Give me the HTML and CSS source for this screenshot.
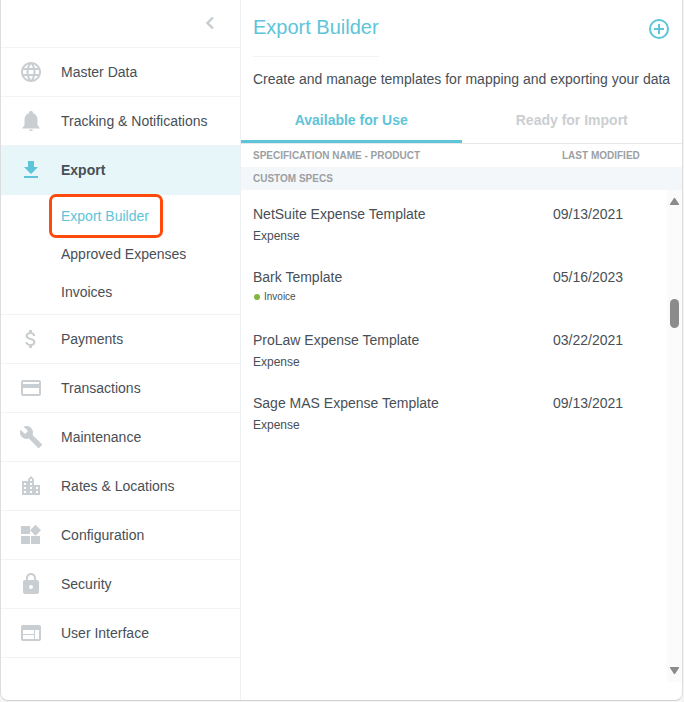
FILE: index.html
```html
<!DOCTYPE html>
<html lang="en">
<head>
  <meta charset="UTF-8" />
  <meta name="viewport" content="width=device-width, initial-scale=1.0"/>
  <title>Export Builder</title>
  <link rel="stylesheet" href="styles.css">
</head>
<body>
  <div class="panel">
    <nav class="sidebar">
      <div class="sidebar-top">
        <button class="collapse" aria-label="Collapse menu">
          <svg viewBox="0 0 24 24"><path d="M15.41 7.41 14 6l-6 6 6 6 1.41-1.41L10.83 12z"/></svg>
        </button>
      </div>
      <a class="nav-item" href="#">
        <svg viewBox="0 0 24 24"><path d="M11.99 2C6.47 2 2 6.48 2 12s4.47 10 9.99 10C17.52 22 22 17.52 22 12S17.52 2 11.99 2zm6.93 6h-2.95c-.32-1.25-.78-2.45-1.38-3.56 1.84.63 3.37 1.91 4.33 3.56zM12 4.04c.83 1.2 1.48 2.53 1.91 3.96h-3.82c.43-1.43 1.08-2.76 1.91-3.96zM4.26 14C4.1 13.36 4 12.69 4 12s.1-1.36.26-2h3.38c-.08.66-.14 1.32-.14 2s.06 1.34.14 2H4.26zm.82 2h2.95c.32 1.25.78 2.45 1.38 3.56-1.84-.63-3.37-1.9-4.33-3.56zm2.95-8H5.08c.96-1.66 2.49-2.93 4.33-3.56C8.81 5.55 8.35 6.75 8.03 8zM12 19.96c-.83-1.2-1.48-2.53-1.91-3.96h3.82c-.43 1.43-1.08 2.76-1.91 3.96zM14.34 14H9.66c-.09-.66-.16-1.32-.16-2s.07-1.35.16-2h4.68c.09.65.16 1.32.16 2s-.07 1.34-.16 2zm.25 5.56c.6-1.11 1.06-2.31 1.38-3.56h2.95c-.96 1.65-2.49 2.93-4.33 3.56zM16.36 14c.08-.66.14-1.32.14-2s-.06-1.34-.14-2h3.38c.16.64.26 1.31.26 2s-.1 1.36-.26 2h-3.38z"/></svg>
        Master Data
      </a>
      <a class="nav-item" href="#">
        <svg viewBox="0 0 24 24"><path d="M12 22c1.100 0 2-.6 2-1.500h-4c0 .9.9 1.500 2 1.500zm6.500-6v-5.500c0-3.070-1.640-5.640-4.500-6.320V3.500c0-.83-.9-1.500-2-1.500s-2 .67-2 1.500v.68C7.130 4.860 5.500 7.420 5.500 10.500V16L3 19.500h18z"/></svg>
        Tracking &amp; Notifications
      </a>
      <a class="nav-item active" href="#">
        <svg viewBox="0 0 24 24"><path d="M19 9h-4V3H9v6H5l7 7 7-7zM5 18v2h14v-2H5z"/></svg>
        Export
      </a>
      <ul class="submenu">
        <li><a class="current" href="#">Export Builder</a></li>
        <li><a href="#">Approved Expenses</a></li>
        <li><a href="#">Invoices</a></li>
      </ul>
      <a class="nav-item" href="#">
        <svg viewBox="0 0 24 24"><path d="M11.800 10.900c-2.270-.59-3-1.200-3-2.150 0-1.090 1.010-1.850 2.700-1.850 1.780 0 2.440.85 2.500 2.100h2.210c-.07-1.720-1.120-3.300-3.210-3.810V3h-3v2.160c-1.940.42-3.500 1.680-3.500 3.610 0 2.310 1.910 3.460 4.700 4.130 2.500.6 3 1.480 3 2.410 0 .69-.49 1.790-2.700 1.790-2.060 0-2.870-.92-2.980-2.100h-2.200c.12 2.190 1.760 3.420 3.680 3.830V21h3v-2.150c1.950-.37 3.500-1.500 3.500-3.550 0-2.840-2.430-3.810-4.700-4.400z"/></svg>
        Payments
      </a>
      <a class="nav-item" href="#">
        <svg viewBox="0 0 24 24"><path d="M20 4H4c-1.110 0-1.990.89-1.990 2L2 18c0 1.110.89 2 2 2h16c1.110 0 2-.89 2-2V6c0-1.110-.89-2-2-2zm0 14H4v-6h16v6zm0-10H4V6h16v2z"/></svg>
        Transactions
      </a>
      <a class="nav-item" href="#">
        <svg viewBox="0 0 24 24"><path d="M22.700 19l-9.100-9.100c.9-2.300.4-5-1.500-6.900-2-2-5-2.400-7.400-1.300L9 6 6 9 1.600 4.700C.4 7.100.9 10.100 2.900 12.100c1.900 1.900 4.600 2.400 6.900 1.500l9.100 9.100c.4.4 1 .4 1.400 0l2.300-2.300c.5-.4.5-1.100.1-1.400z"/></svg>
        Maintenance
      </a>
      <a class="nav-item" href="#">
        <svg viewBox="0 0 24 24"><path d="M15 11V5l-3-3-3 3v2H3v14h18V11h-6zm-8 8H5v-2h2v2zm0-4H5v-2h2v2zm0-4H5V9h2v2zm6 8h-2v-2h2v2zm0-4h-2v-2h2v2zm0-4h-2V9h2v2zm0-4h-2V5h2v2zm6 12h-2v-2h2v2zm0-4h-2v-2h2v2z"/></svg>
        Rates &amp; Locations
      </a>
      <a class="nav-item" href="#">
        <svg viewBox="0 0 24 24"><path d="M12 13h9v8h-9zM2 21h9v-8H2zM2 3v8h9V3zm14.500-1.300L11 7.200l5.500 5.500L22 7.200z"/></svg>
        Configuration
      </a>
      <a class="nav-item" href="#">
        <svg viewBox="0 0 24 24"><path d="M18 8h-1V6c0-2.760-2.240-5-5-5S7 3.240 7 6v2H6c-1.100 0-2 .9-2 2v10c0 1.100.9 2 2 2h12c1.100 0 2-.9 2-2V10c0-1.100-.9-2-2-2zm-6 9c-1.100 0-2-.9-2-2s.9-2 2-2 2 .9 2 2-.9 2-2 2zm3.100-9H8.900V6c0-1.710 1.390-3.100 3.100-3.100s3.100 1.390 3.100 3.100v2z"/></svg>
        Security
      </a>
      <a class="nav-item" href="#">
        <svg viewBox="0 0 24 24"><path d="M20 4H4c-1.100 0-1.990.9-1.990 2L2 18c0 1.100.9 2 2 2h16c1.100 0 2-.9 2-2V6c0-1.100-.9-2-2-2zm-5 14H4v-4h11v4zm0-5H4V9h11v4zm5 5h-4V9h4v9z"/></svg>
        User Interface
      </a>
    </nav>

    <main class="content">
      <header>
        <h1>Export Builder</h1>
        <button class="add" aria-label="Add template">
          <svg viewBox="0 0 20 20"><circle cx="10" cy="10" r="9"/><path d="M10 5v10M5 10h10"/></svg>
        </button>
      </header>
      <p class="intro">Create and manage templates for mapping and exporting your data</p>

      <div class="tabs">
        <button class="tab selected">Available for Use</button>
        <button class="tab">Ready for Import</button>
      </div>

      <div class="list">
        <table>
          <thead>
            <tr><th>SPECIFICATION NAME - PRODUCT</th><th class="date">LAST MODIFIED</th></tr>
          </thead>
          <tbody>
            <tr class="group"><th colspan="2">CUSTOM SPECS</th></tr>
            <tr><td>NetSuite Expense Template<div class="product">Expense</div></td><td class="date">09/13/2021</td></tr>
            <tr><td>Bark Template<div class="product invoice">Invoice</div></td><td class="date">05/16/2023</td></tr>
            <tr><td>ProLaw Expense Template<div class="product">Expense</div></td><td class="date">03/22/2021</td></tr>
            <tr><td>Sage MAS Expense Template<div class="product">Expense</div></td><td class="date">09/13/2021</td></tr>
          </tbody>
        </table>
        <div class="scrollbar">
          <svg viewBox="0 0 9 7"><path d="M4 0h1l4 6v1H0V6z"/></svg>
          <div class="track"><div class="thumb"></div></div>
          <svg viewBox="0 0 9 7"><path d="M0 0h9v1L5 7H4L0 1z"/></svg>
        </div>
      </div>
    </main>
  </div>
</body>
</html>
```

FILE: styles.css
```css
* { box-sizing: border-box; }
body { font-family: "Liberation Sans", Arial, sans-serif; font-size: 14px; line-height: 18px; background: #f5f5f5; color: #484f56; margin: 0; }
button { background: none; border: none; padding: 0; font: inherit; cursor: pointer; }
a { color: inherit; text-decoration: none; }
svg { display: block; fill: #c9ced2; }

.panel { display: flex; min-height: calc(100vh - 1px); margin-right: 1px; background: #fff; border: 1px solid #dcdddf; border-top: none; border-bottom-color: #d0d2d4; border-radius: 0 0 8px 8px; }

/* sidebar */
.sidebar { width: 240px; flex: none; border-right: 1px solid #edf1f4; }
.sidebar-top { height: 48px; display: flex; align-items: center; justify-content: flex-end; padding: 0 18px 1px 0; border-bottom: 1px solid #f1f4f6; }
.collapse svg { width: 24px; height: 24px; stroke: #c9ced2; stroke-width: 0.6; }
.nav-item { display: flex; align-items: center; gap: 18px; height: 49px; padding-left: 18px; border-bottom: 1px solid #f1f4f6; }
.nav-item svg { width: 24px; height: 24px; }
.nav-item.active { background: #e7f6f8; border-color: #e7f6f8; font-weight: bold; }
.nav-item.active svg { fill: #5ec4d8; }
.submenu { list-style: none; margin: 0; padding: 2px 0 3px 60px; border-bottom: 1px solid #f1f4f6; }
.submenu li { display: flex; align-items: center; height: 38px; }
.submenu .current { position: relative; color: #5ec4d8; }
.submenu .current::after { content: ""; position: absolute; inset: -13px -14px -13px -12px; border: 3px solid #ff4a0c; border-radius: 7px; }

/* content */
.content { flex: 1; min-width: 0; display: flex; flex-direction: column; }
header { display: flex; justify-content: space-between; align-items: flex-start; padding: 16px 13px 0 12px; }
h1 { margin: 0; padding-bottom: 18px; font-size: 20px; line-height: 22px; font-weight: normal; color: #5ec4d8; border-bottom: 1px solid #f1f4f6; }
.add { margin-top: 3px; }
.add svg { width: 20px; height: 20px; fill: none; stroke: #5ec4d8; stroke-width: 2; }
.intro { margin: 13px 0 0; padding-left: 12px; }
.tabs { display: flex; margin-top: 9px; border-bottom: 1px solid #e6e8ea; }
.tab { flex: 1; height: 46px; padding-top: 3px; font-weight: bold; color: #cbced1; border-bottom: 3px solid transparent; }
.tab.selected { color: #5ec4d8; border-color: #5ec4d8; }

.list { flex: 1; position: relative; }
table { width: 100%; border-collapse: collapse; }
th { height: 23px; padding: 0 0 0 12px; font-size: 10px; text-align: left; color: #9c9fa2; }
th.date { width: 129px; padding-left: 9px; }
.group { background: #f3f7fa; }
td { height: 63px; padding: 15px 0 4px 12px; vertical-align: top; }
td.date { padding-left: 0; }
.product { font-size: 12px; line-height: 26px; }
.product.invoice { display: flex; align-items: center; gap: 4px; padding-left: 1px; font-size: 10px; line-height: 22px; }
.invoice::before { content: ""; width: 6px; height: 6px; border-radius: 50%; background: #80b63c; }

.scrollbar { position: absolute; top: 46px; right: 0; bottom: 18px; width: 15px; padding: 8px 3px; display: flex; flex-direction: column; background: #fbfbfb; }
.scrollbar svg { width: 9px; height: 7px; fill: #8b8b8b; }
.track { flex: 1; padding-top: 94px; }
.thumb { height: 29px; border-radius: 5px; background: #8b8b8b; }
```
